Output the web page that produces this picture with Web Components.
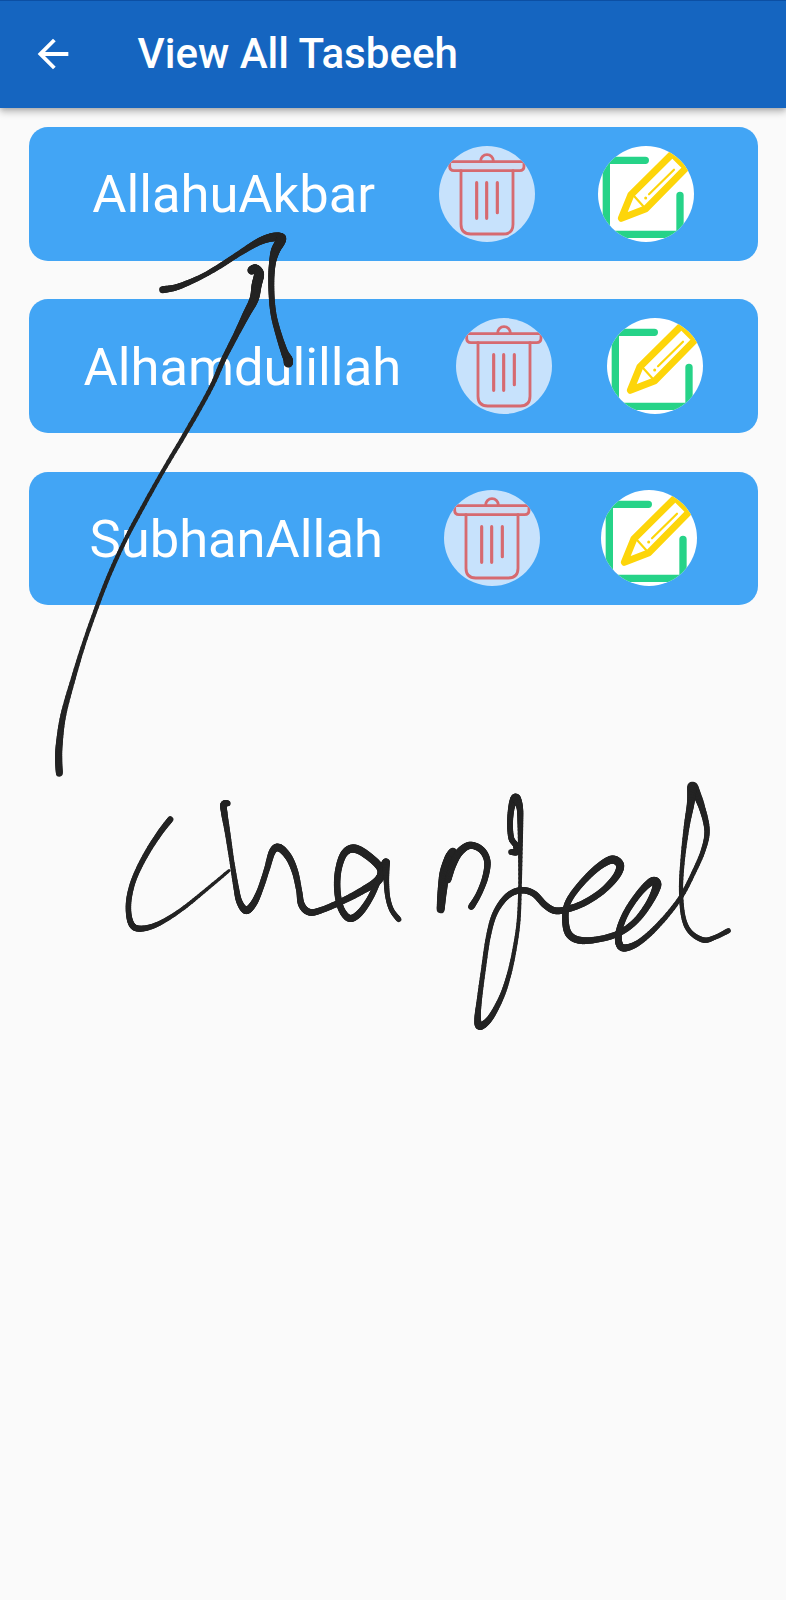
<!DOCTYPE html>
<html lang="en">
<head>
<meta charset="utf-8">
<title>View All Tasbeeh</title>
<style>
html,body{margin:0;padding:0;background:#fafafa}
body{width:786px;height:1600px;overflow:hidden;font-family:Roboto,"Noto Sans",sans-serif}
</style>
</head>
<body>
<tasbeeh-screen></tasbeeh-screen>
<script>
const define = (name, html) => customElements.define(name, class extends HTMLElement {
  constructor() {
    super();
    this.attachShadow({mode: 'open'}).innerHTML = html;
  }
});

define('app-bar', `
<style>
:host{display:flex;align-items:center;box-sizing:border-box;height:108px;padding:0 0 1px 30.4px;gap:61.1px;background:#1565c0;border-top:1px solid #0c4fa3;color:#fff;box-shadow:0 4px 7px rgba(0,0,0,.25),0 1px 4px rgba(0,0,0,.12);position:relative}
svg{width:46px;height:46px;flex:none;display:block}
h1{margin:0;font-size:42.1px;line-height:50px;padding-bottom:1px;font-weight:500;white-space:nowrap}
</style>
<svg viewBox="0 0 24 24" fill="#fff"><path d="M20 11H7.83l5.59-5.59L12 4l-8 8 8 8 1.41-1.41L7.83 13H20v-2z"/></svg>
<h1><slot></slot></h1>`);

define('delete-button', `
<style>:host{display:block;flex:none;width:96px;height:96px;border-radius:50%;overflow:hidden;background:#c7e2fc}svg{display:block}</style>
<svg width="96" height="96" viewBox="0 0 288 288" fill="none" stroke="#d66a70" stroke-width="8.5" stroke-linecap="round">
<path d="M32 47H255V61Q255 74 242 74H45Q32 74 32 61Z" fill="#cfdcf3"/>
<path d="M125 45A19 19 0 0 1 163 45"/>
<path d="M66 74V235Q66 264 95 264H193Q222 264 222 235V74"/>
<path stroke-width="9.5" d="M113 110V217M143 110V217M175 110V200"/>
</svg>`);

define('edit-button', `
<style>:host{display:block;flex:none;width:96px;height:96px;border-radius:50%;overflow:hidden;background:#fff}svg{display:block}</style>
<svg width="96" height="96" viewBox="0 0 288 288" fill="none" stroke-linecap="round" stroke-linejoin="round">
<path d="M142 43H25V265H246V148" stroke="#26d388" stroke-width="22"/>
<path d="M70 217L99 146L223 23L265 65L144 188Z" fill="#fff" stroke="#fdd50a" stroke-width="21"/>
<path d="M106 148L140 185M153 145L228 71" stroke="#fdd50a" stroke-width="6.5"/>
<circle cx="143" cy="156" r="4.5" fill="#fdd50a"/>
</svg>`);

define('tasbeeh-card', `
<style>
:host{display:flex;align-items:center;justify-content:space-evenly;height:133.8px;border-radius:19px;background:#42a5f5;color:#fff}
span{font-size:52.5px;line-height:62px;padding-top:.8px;white-space:nowrap}
</style>
<span><slot></slot></span><delete-button></delete-button><edit-button></edit-button>`);

/* Pen strokes: each data-pen holds x,y,width triples, smoothed into a variable-width line. */
customElements.define('ink-layer', class extends HTMLElement {
  constructor() {
    super();
    this.attachShadow({mode: 'open'}).innerHTML = `
<style>:host{display:block;position:absolute;inset:0;pointer-events:none}svg{display:block}</style>
<svg width="786" height="1600" viewBox="0 0 786 1600" stroke="#232323" stroke-linecap="round">
<g transform="translate(140 210) scale(.33333)">
<g data-pen="68,239,22 105,233,19 145,218,17 190,197,15 240,168,16 300,129,17 355,96,22 395,82,26 422,83,29 421,95,30 407,120,28 398,155,21 394,200,19 395,260,18 401,315,18 415,370,19 433,425,22 444,448,28 445,459,28"/>
<g data-pen="335,181,26 346,177,28 357,192,31 350,225,31 342,268,28 318,315,23 288,375,18 250,450,16 212,535,14 142,660,14 68,785,13 7,894,13 -45,992,13 -91,1092,13 -130,1192,13 -168,1300,13 -200,1405,15 -230,1515,18 -242,1600,21 -244,1650,22 -242,1690,21"/>
</g>
<g transform="translate(110 780) scale(.33333)">
<g data-pen="181,118,19 150,158,18 110,220,17 75,290,16 58,350,17 56,400,17 66,435,19 88,446,19 130,438,16 180,412,13 230,377,12 290,328,11 357,272,10"/>
<g data-pen="353,70,18 341,73,20 343,100,20 353,160,17 365,240,15 378,320,17 388,365,19 408,391,23 430,372,21 450,330,18 470,270,18 487,215,21 507,203,24 535,230,22 555,275,20 567,330,18 575,375,21 600,397,21 640,388,19 700,362,20 760,330,22 805,300,26 813,268,24 780,232,24 735,206,26 703,220,22 685,270,20 682,330,20 693,385,20 718,415,22 748,400,21 780,355,19 805,300,19 820,260,22 828,247,24"/>
<g data-pen="828,247,24 829,300,17 833,350,15 845,390,15 866,418,17"/>
</g>
<g transform="translate(420 770) scale(.33333)">
<g data-pen="62,418,24 66,370,28 74,310,32 88,265,30 99,246,26"/>
<g data-pen="84,330,20 98,285,22 118,247,24 150,226,22 185,240,21 202,275,20 195,325,19 175,375,18 154,410,20"/>
<g data-pen="273,246,17 290,245,21 287,225,18 274,205,18 270,160,18 275,110,20 287,84,28 299,112,20 301,160,18 301,250,14 300,350,11 296,450,12 285,530,13 268,610,14 245,680,16 210,745,19 180,768,24 173,745,20 178,690,16 190,600,15 205,500,15 225,430,16 260,380,18 300,361,20 340,370,20 375,405,20 405,422,21 440,418,20 490,400,20 545,365,20 588,320,22 600,285,25 575,269,25 530,295,21 480,345,19 445,395,19 436,440,20 445,490,22 480,511,22 540,507,19 600,488,19 650,450,19 690,395,21 711,345,27 696,334,24 660,367,20 620,425,19 598,480,20 597,520,22 615,534,22 660,515,18 720,460,16 780,385,14 820,310,14 850,240,15 861,180,17 845,110,20 820,50,30"/>
<g data-pen="816,50,30 812,100,23 800,170,18 788,270,14 783,360,13 790,440,14 810,485,15 850,510,17 885,502,14 925,482,16"/>
</g>
</svg>`;
    for (const g of this.shadowRoot.querySelectorAll('[data-pen]')) this.ink(g);
  }
  ink(g) {
    const p = g.dataset.pen.split(' ').map(s => s.split(',').map(Number));
    const pts = [], steps = 8;
    for (let i = 0; i < p.length - 1; i++) {
      const a = p[i - 1] || p[i], b = p[i], c = p[i + 1], e = p[i + 2] || c;
      for (let s = 0; s < steps; s++) {
        const t = s / steps;
        pts.push(b.map((v, k) => k === 2 ? v + (c[k] - v) * t :
          .5 * (2 * v + (c[k] - a[k]) * t + (2 * a[k] - 5 * v + 4 * c[k] - e[k]) * t * t + (3 * v - a[k] - 3 * c[k] + e[k]) * t * t * t)));
      }
    }
    pts.push(p[p.length - 1]);
    for (let i = 1; i < pts.length; i++) {
      const [x1, y1, w1] = pts[i - 1], [x2, y2, w2] = pts[i];
      const line = document.createElementNS('http://www.w3.org/2000/svg', 'line');
      const attrs = {x1, y1, x2, y2, 'stroke-width': (w1 + w2) / 2 - .6};
      for (const k in attrs) line.setAttribute(k, attrs[k].toFixed(2));
      g.append(line);
    }
  }
});

define('tasbeeh-screen', `
<style>
:host{display:block;position:relative;width:786px;height:1600px;background:#fafafa;overflow:hidden}
main{display:flex;flex-direction:column;gap:38.5px;padding:19px 28.5px 19px 28.7px}
</style>
<app-bar>View All Tasbeeh</app-bar>
<main>
<tasbeeh-card>AllahuAkbar</tasbeeh-card>
<tasbeeh-card>Alhamdulillah</tasbeeh-card>
<tasbeeh-card>SubhanAllah</tasbeeh-card>
</main>
<ink-layer></ink-layer>`);
</script>
</body>
</html>
